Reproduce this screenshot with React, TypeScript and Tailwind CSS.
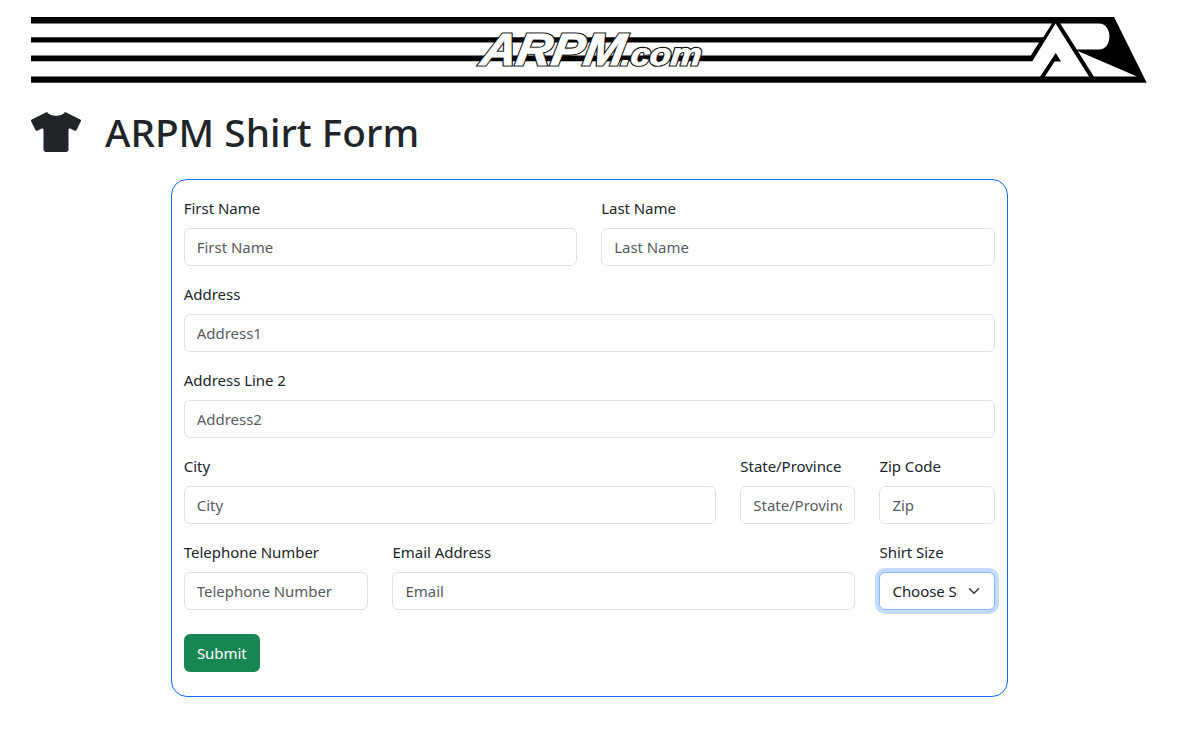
import { useId } from 'react';
import { FaTshirt } from 'react-icons/fa';

const inputClass =
  "block h-[38px] w-full rounded-md border border-[#dee2e6] bg-white px-3 text-[15px] tracking-[-0.04px] text-[#212529] outline-none placeholder:text-[#595c5f] placeholder:opacity-100";

const labelClass = 'mb-2 block h-6 leading-6 whitespace-nowrap';

function Field({ label, placeholder, span, type = 'text' }: { label: string; placeholder: string; span: string; type?: string }) {
  const id = useId();
  return (
    <div className={`px-3 ${span}`}>
      <label htmlFor={id} className={labelClass}>{label}</label>
      <input id={id} type={type} placeholder={placeholder} className={inputClass} />
    </div>
  );
}

function Banner() {
  return (
    <svg viewBox="31 17 1116 66" className="block h-[66px] w-[1116px]" role="img" aria-label="ARPM.com">
      <defs>
        <g id="wordmark" fontFamily="'Liberation Sans', Arial, sans-serif" fontWeight="700" fontStyle="italic">
          <text transform="translate(479.5 65) skewX(-10)" fontSize="45" textLength="143" lengthAdjust="spacingAndGlyphs">ARPM</text>
          <text transform="translate(620.5 65) skewX(-6)" fontSize="31" textLength="80" lengthAdjust="spacingAndGlyphs">.com</text>
        </g>
      </defs>
      <path d="M31 17H1114L1146.7 82.8H31Z" fill="#000" />
      <g fill="#fff">
        <path d="M31 23.4H1052L1043.2 37.2H31Z" />
        <path d="M31 42.6H1039L1030.8 55.6H31Z" />
        <path d="M31 61.2H1032.3L1055.6 23.6L1089 76.5H1045L1054.6 61.4H1061L1055.7 53L1040.2 76.5H31Z" />
        <path d="M1060.3 23.4H1099C1105.5 23.4 1109.4 29.5 1109.4 36.5C1109.4 43.5 1105.5 49.6 1099 49.6H1076.8Z" />
        <path d="M1077.8 51L1137 76.4H1093.8Z" />
      </g>
      <use href="#wordmark" fill="#111" stroke="#111" strokeWidth="3.1" />
      <use href="#wordmark" fill="#fff" stroke="#fff" strokeWidth="0.9" />
    </svg>
  );
}

export default function App() {
  const sizeId = useId();
  return (
    <main className="min-h-[754px] bg-white pt-[17px] pl-[31px] font-['Noto_Sans','Open_Sans',sans-serif] text-[15px] tracking-[-0.04px] text-[#212529]">
      <Banner />
      <header className="mt-[25px] flex h-12 items-center">
        <FaTshirt className="h-10 w-[50px]" />
        <h1 className="ml-6 text-[38.8px] leading-[48px] font-medium tracking-normal whitespace-nowrap">ARPM Shirt Form</h1>
      </header>
      <form
        className="mt-[23px] ml-[139.8px] w-[836.8px] rounded-2xl border border-[#0d6efd] pt-4 pb-6"
        onSubmit={(e) => e.preventDefault()}
      >
        <div className="grid grid-cols-12 gap-y-4">
          <Field label="First Name" placeholder="First Name" span="col-span-6" />
          <Field label="Last Name" placeholder="Last Name" span="col-span-6" />
          <Field label="Address" placeholder="Address1" span="col-span-12" />
          <Field label="Address Line 2" placeholder="Address2" span="col-span-12" />
          <Field label="City" placeholder="City" span="col-span-8" />
          <Field label="State/Province" placeholder="State/Province" span="col-span-2" />
          <Field label="Zip Code" placeholder="Zip" span="col-span-2" />
          <Field label="Telephone Number" placeholder="Telephone Number" span="col-span-3" type="tel" />
          <Field label="Email Address" placeholder="Email" span="col-span-7" type="email" />
          <div className="col-span-2 px-3">
            <label htmlFor={sizeId} className={labelClass}>Shirt Size</label>
            <div className="grid">
              <select
                id={sizeId}
                className="col-start-1 row-start-1 h-[38px] w-full appearance-none rounded-md border border-[#86b7fe] bg-white pt-px pr-9 pl-3 text-[15px] tracking-[-0.04px] text-[#212529] shadow-[0_0_0_4px_rgba(13,110,253,0.25)] outline-none"
              >
                <option>Choose Size</option>
                <option>Small</option>
                <option>Medium</option>
                <option>Large</option>
              </select>
              <svg viewBox="0 0 16 16" className="pointer-events-none col-start-1 row-start-1 mr-[13px] h-3 w-4 self-center justify-self-end">
                <path fill="none" stroke="#343a40" strokeLinecap="round" strokeLinejoin="round" strokeWidth="2" d="m2 5 6 6 6-6" />
              </svg>
            </div>
          </div>
        </div>
        <button type="submit" className="mt-6 ml-3 block h-[38px] w-[76px] rounded-md bg-[#198754] text-white">Submit</button>
      </form>
    </main>
  );
}
